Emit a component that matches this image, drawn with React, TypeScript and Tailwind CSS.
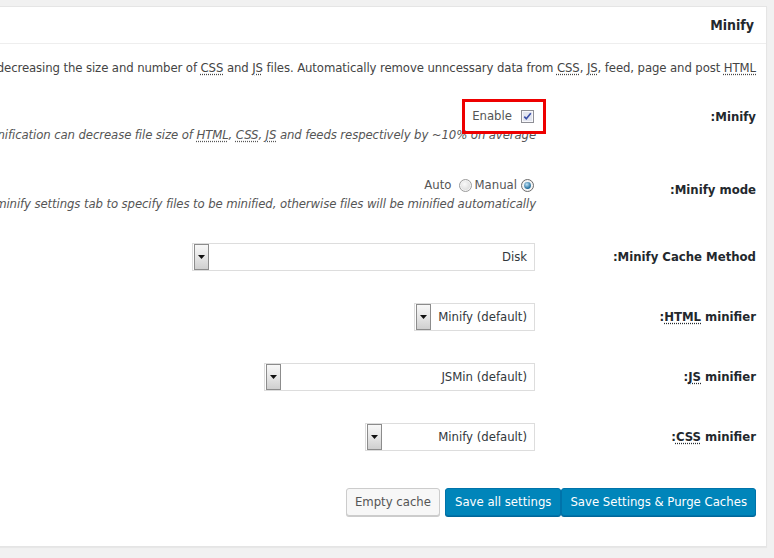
import React from 'react';

const FONT = { fontFamily: '"DejaVu Sans Condensed", "DejaVu Sans", Tahoma, sans-serif' };

const Abbr: React.FC<{ title: string; children: React.ReactNode }> = ({ title, children }) => (
  <abbr title={title} className="underline decoration-dotted underline-offset-2">
    {children}
  </abbr>
);

// native-looking select box, arrow button on the left in rtl
const FakeSelect: React.FC<{ value: string; width: string }> = ({ value, width }) => (
  <div className={`${width} h-[28px] bg-white border border-[#dddddd] flex items-center justify-between pr-[7px] pl-[1px]`}>
    <span className="text-[13px] text-[#32373c]">{value}</span>
    <span className="w-[15px] h-[26px] border border-[#8c8c8c] bg-gradient-to-b from-[#f8f8f8] via-[#e6e6e6] to-[#cfcfcf] flex items-center justify-center">
      <svg width="7" height="4" viewBox="0 0 7 4">
        <path d="M0 0h7L3.5 4z" fill="#111" />
      </svg>
    </span>
  </div>
);

const Checkbox: React.FC = () => (
  <svg width="13" height="13" viewBox="0 0 13 13" className="block">
    <rect x="0.5" y="0.5" width="12" height="12" fill="#f2f3f8" stroke="#8e8f96" />
    <rect x="1.5" y="1.5" width="10" height="10" fill="#e3e6f0" stroke="#ffffff" strokeOpacity="0.6" />
    <path d="M3.3 6.6l2 2.2L9.8 3.2" fill="none" stroke="#3a4fa8" strokeWidth="1.6" />
  </svg>
);

const Radio: React.FC<{ checked?: boolean }> = ({ checked }) => (
  <svg width="13" height="13" viewBox="0 0 13 13" className="block">
    <defs>
      <radialGradient id={checked ? 'rdOn' : 'rdOff'} cx="0.4" cy="0.35" r="0.7">
        <stop offset="0" stopColor={checked ? '#bfe3f7' : '#ffffff'} />
        <stop offset="1" stopColor={checked ? '#0b5b8d' : '#c9c9c9'} />
      </radialGradient>
    </defs>
    <circle cx="6.5" cy="6.5" r="6" fill="#f4f4f4" stroke={checked ? '#6b6b6b' : '#9b9b9b'} />
    {checked ? (
      <circle cx="6.5" cy="6.5" r="3.4" fill="url(#rdOn)" />
    ) : (
      <circle cx="6.5" cy="6.5" r="4.6" fill="url(#rdOff)" opacity="0.55" />
    )}
  </svg>
);

const Label: React.FC<{ children: React.ReactNode }> = ({ children }) => (
  <div className="w-[220px] shrink-0 text-[13px] leading-[20px] font-bold text-[#23282d]">{children}</div>
);

const SelectRow: React.FC<{ label: React.ReactNode; value: string; width: string }> = ({ label, value, width }) => (
  <div className="flex items-center h-[60px]">
    <Label>{label}</Label>
    <div className="flex-1 pr-[1px]">
      <FakeSelect value={value} width={width} />
    </div>
  </div>
);

const App: React.FC = () => {
  return (
    <div className="w-[774px] h-[558px] overflow-hidden bg-[#f1f1f1] pt-[6px]" style={FONT}>
      <div
        dir="rtl"
        className="w-[767px] h-[541px] bg-white border-t border-r border-b border-[#e5e5e5] shadow-[0_1px_1px_rgba(0,0,0,0.04)] overflow-hidden"
      >
        {/* box title */}
        <div className="h-[37px] border-b border-[#eeeeee] flex items-center pr-[12px]">
          <h3 className="text-[14px] font-bold text-[#23282d]">Minify</h3>
        </div>

        <div className="pr-[10px] text-[13px] text-[#444444]">
          <p className="pt-[15px] leading-[18px] whitespace-nowrap tracking-[-0.1px]">
            Reduce load time by decreasing the size and number of <Abbr title="Cascading Style Sheet">CSS</Abbr> and{' '}
            <Abbr title="JavaScript">JS</Abbr> files. Automatically remove unncessary data from{' '}
            <Abbr title="Cascading Style Sheet">CSS</Abbr>, <Abbr title="JavaScript">JS</Abbr>, feed, page and post{' '}
            <Abbr title="Hypertext Markup Language">HTML</Abbr>.
          </p>

          {/* Minify */}
          <div className="flex h-[73px] mt-[10px]">
            <div className="pt-[20px]">
              <Label>Minify:</Label>
            </div>
            <div className="flex-1 min-w-0 pt-[19px] pr-[2px]">
              <div className="h-[20px] flex items-center">
                <span className="relative flex items-center">
                  <Checkbox />
                  <span className="mr-[9px] text-[#555555]">Enable</span>
                  <span className="absolute -top-[7px] -bottom-[8px] -right-[12px] -left-[10px] border-[3px] border-[#ee0000] pointer-events-none" />
                </span>
              </div>
              <p className="h-[18px] leading-[18px] italic whitespace-nowrap tracking-[-0.1px] text-[#555555] -mr-[2px]">
                Minification can decrease file size of <Abbr title="Hypertext Markup Language">HTML</Abbr>,{' '}
                <Abbr title="Cascading Style Sheet">CSS</Abbr>, <Abbr title="JavaScript">JS</Abbr> and feeds respectively by
                ~10% on average.
              </p>
            </div>
          </div>

          {/* Minify mode */}
          <div className="flex h-[67px]">
            <div className="pt-[20px]">
              <Label>Minify mode:</Label>
            </div>
            <div className="flex-1 min-w-0 pt-[15px] pr-[2px]">
              <div dir="ltr" className="h-[20px] flex items-center justify-end text-[#555555]">
                <span>Auto</span>
                <span className="ml-[8px]">
                  <Radio />
                </span>
                <span className="ml-[2px]">Manual</span>
                <span className="ml-[4px]">
                  <Radio checked />
                </span>
              </div>
              <p className="h-[18px] leading-[18px] italic whitespace-nowrap tracking-[-0.1px] text-[#555555] -mr-[2px]">
                Select manual mode to use fields on the minify settings tab to specify files to be minified, otherwise files
                will be minified automatically.
              </p>
            </div>
          </div>

          <SelectRow label="Minify Cache Method:" value="Disk" width="w-[343px]" />
          <SelectRow
            label={
              <>
                <Abbr title="Hypertext Markup Language">HTML</Abbr> minifier:
              </>
            }
            value="Minify (default)"
            width="w-[121px]"
          />
          <SelectRow
            label={
              <>
                <Abbr title="JavaScript">JS</Abbr> minifier:
              </>
            }
            value="JSMin (default)"
            width="w-[271px]"
          />
          <SelectRow
            label={
              <>
                <Abbr title="Cascading Style Sheet">CSS</Abbr> minifier:
              </>
            }
            value="Minify (default)"
            width="w-[170px]"
          />

          {/* actions */}
          <div className="flex items-center pt-[21px]">
            <button className="h-[28px] px-[8px] rounded-[3px] bg-[#0085ba] border border-[#0073aa] shadow-[0_1px_0_#006799] text-white text-[13px]">
              Save Settings &amp; Purge Caches
            </button>
            <button className="h-[28px] px-[9px] rounded-[3px] bg-[#0085ba] border border-[#0073aa] shadow-[0_1px_0_#006799] text-white text-[13px]">
              Save all settings
            </button>
            <button className="h-[28px] px-[8px] mr-[5px] rounded-[3px] bg-[#f7f7f7] border border-[#cccccc] shadow-[0_1px_0_#cccccc] text-[#555555] text-[13px]">
              Empty cache
            </button>
          </div>
        </div>
      </div>
    </div>
  );
};

export default App;
